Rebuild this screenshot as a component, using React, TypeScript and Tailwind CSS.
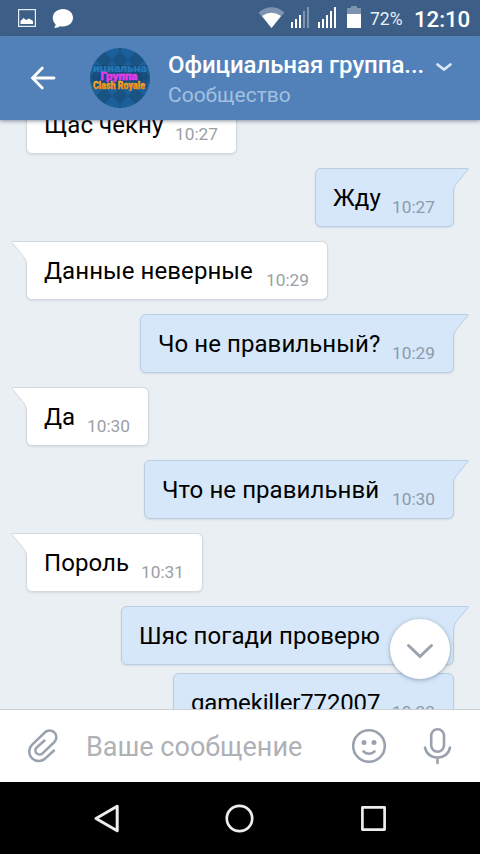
import clsx from "clsx";
import React from "react";

type Message = {
  text: string;
  time: string;
  width: string;
  out?: boolean;
  tail?: boolean;
  gap?: string;
  tracking?: string;
};

const messages: Message[] = [
  { text: "Щас чекну", time: "10:27", width: "w-[211px]" },
  { text: "Жду", time: "10:27", width: "w-[139px]", out: true, tail: true, gap: "mt-3.5" },
  { text: "Данные неверные", time: "10:29", width: "w-[302px]", tail: true, gap: "mt-3.5" },
  { text: "Чо не правильный?", time: "10:29", width: "w-[314px]", out: true, tail: true, gap: "mt-3.5" },
  { text: "Да", time: "10:30", width: "w-[123px]", tail: true, gap: "mt-3.5" },
  { text: "Что не правильнвй", time: "10:30", width: "w-[310px]", out: true, tail: true, gap: "mt-3.5" },
  { text: "Пороль", time: "10:31", width: "w-[177px]", tail: true, gap: "mt-3.5" },
  { text: "Шяс погади проверю", time: "10:32", width: "w-[333px]", out: true, tail: true, gap: "mt-3.5" },
  { text: "gamekiller772007", time: "10:32", width: "w-[281px]", out: true, gap: "mt-2", tracking: "tracking-[-0.16px]" },
];

const Tail = ({ out }: { out?: boolean }) => (
  <svg
    width="22"
    height="24"
    viewBox="0 0 22 24"
    className={clsx("absolute -top-px", out ? "-right-4 -scale-x-100" : "-left-4")}
  >
    <path d="M22 0.5H1.2Q0.3 0.7 1 1.5L12.5 15.5Q15.5 19 15.5 23V24H22Z" fill={out ? "#d6e7f9" : "#ffffff"} />
    <path
      d="M22 0.5H1.2Q0.3 0.7 1 1.5L12.5 15.5Q15.5 19 15.5 23V24"
      fill="none"
      stroke={out ? "#b9cde3" : "#d3d9df"}
      strokeWidth="1"
    />
  </svg>
);

const Bubble = ({ text, time, width, out, tail, gap, tracking = "tracking-[0.07px]" }: Message) => (
  <div
    className={clsx(
      "relative flex h-[59px] shrink-0 items-baseline justify-between rounded-md border pl-[17px] pr-[18px] pt-[14px] shadow-[0_1px_2px_rgba(120,140,165,0.2)]",
      width,
      gap,
      out ? "self-end border-[#b9cde3] bg-[#d6e7f9]" : "self-start border-[#d3d9df] bg-white"
    )}
  >
    {tail && <Tail out={out} />}
    <span className={clsx("whitespace-nowrap text-[24px] leading-[30px] text-black", tracking)}>{text}</span>
    <span
      className={clsx(
        "relative top-[7px] whitespace-nowrap text-[17.3px] leading-5",
        out ? "text-[#8b9bad]" : "text-[#9b9fa5]"
      )}
    >
      {time}
    </span>
  </div>
);

const StatusBar = () => (
  <div className="flex h-9 shrink-0 items-center bg-[#3d5f87] text-white">
    <svg width="80" height="36" viewBox="0 0 80 36">
      <rect x="18.6" y="9.6" width="16.8" height="16.8" fill="none" stroke="#e6edf5" strokeWidth="1.2" />
      <path d="M20.5 24v-3l3-3 2.5 2 3-1.5 4 2.5v3z" fill="#fff" />
      <path d="M63 9c5.600 0 10 3.800 10 8.700s-4.400 8.800-10 8.800c-1 0-2-.1-3-.3-1.500 1.100-3.500 1.700-6 1.600 1-1 1.600-2.200 1.600-3.500-1.700-1.600-2.800-4-2.800-6.600C52.800 12.800 57.400 9 63 9z" fill="#fff" />
    </svg>
    <svg width="130" height="36" viewBox="240 0 130 36" className="ml-40 shrink-0">
      <path d="M258.500 12.500Q271.500 1.800 284.500 12.500L271.500 28z" fill="#7c94b0" />
      <path d="M262 16Q271.500 9.500 281 16L271.500 28z" fill="#fff" />
      <path d="M291 22h2v6h-2zM295 19h2v9h-2zM299 15h2v13h-2z" fill="#fff" />
      <path d="M303 11h2v17h-2zM307 7h2v21h-2z" fill="#7c94b0" />
      <path d="M318 22h2v6h-2zM322 19h2v9h-2zM326 15h2v13h-2zM330 11h2v17h-2zM334 7h2v21h-2z" fill="#fff" />
      <path d="M347 8h4V6h6v2h4v6h-14z" fill="#7c94b0" />
      <path d="M347 14h14v14h-14z" fill="#fff" />
    </svg>
    <span className="w-[44px] whitespace-nowrap pt-0.5 text-[17.5px] leading-[34px] text-[#eaf0f6]">72%</span>
    <span className="whitespace-nowrap pt-0.5 text-[22.3px] font-medium leading-[34px] tracking-[-0.1px]">12:10</span>
  </div>
);

const Avatar = () => (
  <svg width="60" height="60" viewBox="0 0 60 60" className="ml-[34px] shrink-0">
    <defs>
      <clipPath id="round">
        <circle cx="30" cy="30" r="30" />
      </clipPath>
      <pattern id="diamonds" width="16" height="18" x="6" y="3" patternUnits="userSpaceOnUse">
        <rect width="16" height="18" fill="#1b609a" />
        <path d="M8 0L16 9 8 18 0 9z" fill="#195384" />
      </pattern>
      <linearGradient id="gold" x1="0" y1="0" x2="0" y2="1">
        <stop offset="0.2" stopColor="#ffb51c" />
        <stop offset="1" stopColor="#ed7916" />
      </linearGradient>
    </defs>
    <g clipPath="url(#round)" fontFamily="Roboto, sans-serif" fontWeight="900" textAnchor="middle">
      <rect width="60" height="60" fill="url(#diamonds)" />
      <rect x="3" y="17" width="54" height="23" fill="#163f68" opacity="0.5" />
      <text x="30" y="24" fontSize="10.5" textLength="54" lengthAdjust="spacingAndGlyphs" fill="#2479b8">
        ициальна
      </text>
      <text x="29" y="31.5" fontSize="10" textLength="37" lengthAdjust="spacingAndGlyphs" fill="#e33bea" stroke="#e33bea" strokeWidth="0.4">
        Группа
      </text>
      <text x="29" y="40.5" fontSize="10" textLength="52" lengthAdjust="spacingAndGlyphs" fill="url(#gold)" stroke="#f39a1a" strokeWidth="0.3">
        Clash Royale
      </text>
    </g>
  </svg>
);

const Header = () => (
  <div className="relative z-10 flex h-[84px] shrink-0 items-center bg-[#5181b8] shadow-[0_1px_4px_rgba(60,70,90,0.6)]">
    <svg width="26" height="24" viewBox="0 0 26 24" fill="none" stroke="#fff" strokeWidth="2.8" strokeLinecap="round" className="ml-[30px] shrink-0">
      <path d="M24 12H2.5M12.3 2L2.5 12l9.8 10" />
    </svg>
    <Avatar />
    <div className="ml-[18px] w-[256px] pt-1">
      <div className="whitespace-nowrap text-[24px] font-medium leading-[30px] tracking-[-0.05px] text-white">Официальная группа...</div>
      <div className="whitespace-nowrap text-[21px] leading-[30px] text-[#a3c0e0]">Сообщество</div>
    </div>
    <svg width="16" height="12" viewBox="0 0 16 12" fill="none" stroke="#dce8f5" strokeWidth="2.6" strokeLinecap="round" className="-mt-[23px] ml-3">
      <path d="M1.5 3.5L8 8.5l6.500-5" />
    </svg>
  </div>
);

const Composer = () => (
  <div className="flex h-[73px] shrink-0 items-center border-t border-[#cbd0d6] bg-white">
    <svg width="86" height="72" viewBox="0 710 86 72" fill="none" stroke="#99a2ad" strokeWidth="2.5" strokeLinecap="round" strokeLinejoin="round">
      <path d="M54 750.5L45.600 758.200A9.500 9.500 0 0 1 32 744.800L44.800 732.500A6.700 6.700 0 0 1 54.400 742L42.500 753.300A4.100 4.100 0 0 1 36.500 747.600L44.500 740.500" />
    </svg>
    <span className="w-[254px] whitespace-nowrap pt-0.5 text-[27px] leading-9 text-[#aeb1b5]">Ваше сообщение</span>
    <svg width="140" height="72" viewBox="340 710 140 72" fill="none" stroke="#99a2ad" strokeWidth="2.6" strokeLinecap="round">
      <circle cx="369" cy="746" r="15.8" />
      <circle cx="364" cy="742.5" r="2.5" fill="#99a2ad" stroke="none" />
      <circle cx="374" cy="742.5" r="2.5" fill="#99a2ad" stroke="none" />
      <path d="M363.500 751.500q5.500 4.500 11 0" />
      <rect x="431.2" y="729.2" width="12.8" height="22.5" rx="6.4" />
      <path d="M425 747.500c2.500 13.500 22.500 13.500 25 0M437.500 758v5" />
    </svg>
  </div>
);

const NavBar = () => (
  <div className="h-[72px] shrink-0 bg-black">
    <svg width="480" height="72" viewBox="0 782 480 72" fill="none" stroke="#ededed" strokeWidth="2.7" strokeLinejoin="round">
      <path d="M117.200 806.300v24.400L96 818.500z" strokeWidth="3" />
      <circle cx="239.5" cy="818.5" r="12.7" />
      <rect x="362.4" y="807.4" width="22.2" height="22.2" />
    </svg>
  </div>
);

const App = () => {
  return (
    <div className="flex h-[854px] w-[480px] flex-col overflow-hidden bg-[#eaeff4] font-[Roboto,'Noto_Sans',sans-serif]">
      <StatusBar />
      <Header />
      <div className="relative min-h-0 flex-1 overflow-hidden">
        <div className="-mt-[25px] flex flex-col px-[26px]">
          {messages.map((message, id) => (
            <Bubble key={id} {...message} />
          ))}
        </div>
        <button className="absolute bottom-[30px] right-[30px] flex h-[60px] w-[60px] items-center justify-center rounded-full bg-white shadow-[0_1px_4px_rgba(70,90,120,0.5)]">
          <svg width="28" height="16" viewBox="0 0 28 16" fill="none" stroke="#99a2ad" strokeWidth="3" strokeLinecap="round" className="mt-1">
            <path d="M2.5 2.5L14 13.5l11.500-11" />
          </svg>
        </button>
      </div>
      <Composer />
      <NavBar />
    </div>
  );
};

export default App;
